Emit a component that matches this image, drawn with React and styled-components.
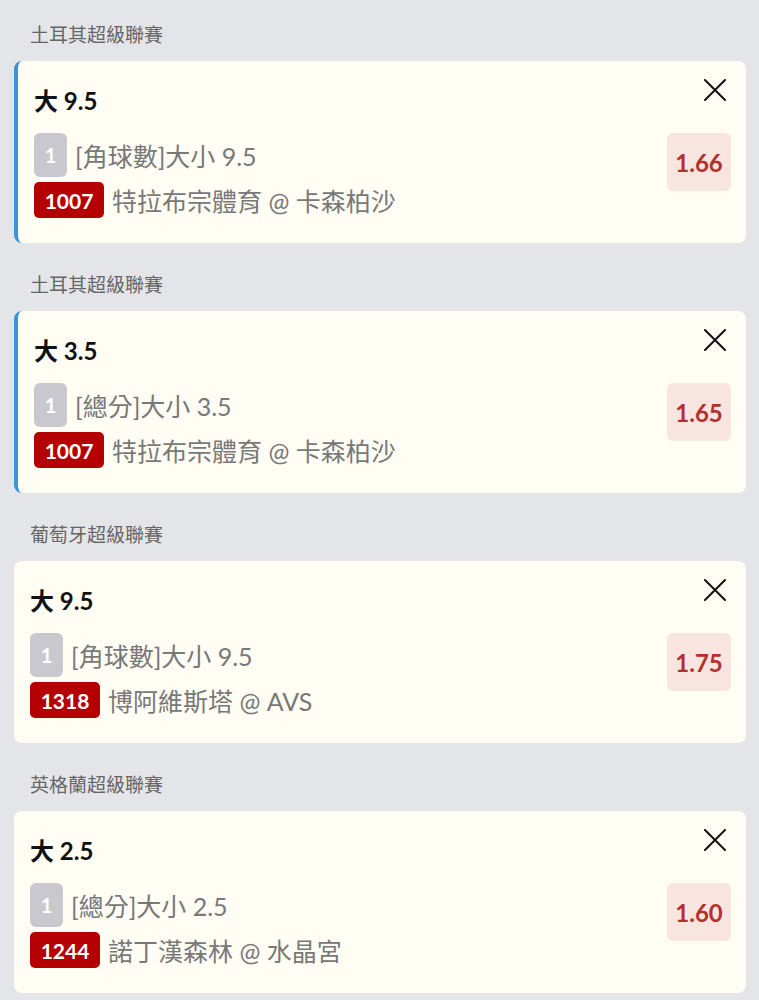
import React from "react";
import styled, { createGlobalStyle } from "styled-components";

const Global = createGlobalStyle`
  html, body { margin: 0; padding: 0; background: #e4e5e9; }
  body { font-family: Lato, "Noto Sans CJK TC", sans-serif; }
  * { box-sizing: border-box; }
`;

const Page = styled.div`
  display: flex;
  flex-direction: column;
  gap: 17px;
  padding: 10px 13px 0 14px;
  background: #e4e5e9;
  min-height: 1000px;
`;

const Section = styled.section`
  display: flex;
  flex-direction: column;
`;

const League = styled.div`
  height: 51px;
  display: flex;
  align-items: center;
  padding: 0 0 5px 16px;
  font-size: 19px;
  color: #666;
`;

const Card = styled.div`
  background: #fffdf4;
  border-radius: 8px;
  border-left: ${(p) => (p.$active ? "4px solid #3b94d9" : "none")};
  padding: 18px 15px 25px 16px;
  height: 182px;
  display: flex;
  flex-direction: column;
`;

const Header = styled.div`
  display: flex;
  justify-content: space-between;
  align-items: flex-start;
`;

const Title = styled.div`
  margin-top: 7px;
  font-size: 24px;
  line-height: 30px;
  font-weight: 700;
  color: #111;
`;

const Close = styled.button`
  border: none;
  background: none;
  padding: 0;
  margin-right: 5px;
  width: 22px;
  height: 22px;
  display: flex;
  cursor: pointer;
`;

const Body = styled.div`
  display: flex;
  justify-content: space-between;
  align-items: flex-start;
  margin-top: 17px;
`;

const Lines = styled.div`
  display: flex;
  flex-direction: column;
  gap: 5px;
`;

const Line = styled.div`
  display: flex;
  align-items: center;
  gap: 8px;
  font-size: 25px;
  font-weight: 400;
  color: #787878;
  white-space: nowrap;
`;

const SeqBadge = styled.span`
  width: 33px;
  height: 44px;
  border-radius: 6px;
  background: #c8c8ce;
  color: #fff;
  font-weight: 700;
  font-size: 20px;
  display: flex;
  align-items: center;
  justify-content: center;
`;

const CodeBadge = styled.span`
  min-width: 70px;
  height: 36px;
  padding: 0 6px;
  border-radius: 5px;
  background: #b50003;
  color: #fff;
  font-weight: 700;
  font-size: 21px;
  display: flex;
  align-items: center;
  justify-content: center;
`;

const Odds = styled.div`
  width: 64px;
  height: 58px;
  border-radius: 6px;
  background: #f8e5df;
  color: #b3302c;
  font-weight: 700;
  font-size: 24px;
  display: flex;
  align-items: center;
  justify-content: center;
`;

const XIcon = () => (
  <svg width="22" height="22" viewBox="0 0 22 22" fill="none">
    <path d="M1 1L21 21M21 1L1 21" stroke="#111" strokeWidth="2" strokeLinecap="round" />
  </svg>
);

const bets = [
  { league: "土耳其超級聯賽", title: "大 9.5", market: "[角球數]大小 9.5", code: "1007", match: "特拉布宗體育 @ 卡森柏沙", odds: "1.66", active: true },
  { league: "土耳其超級聯賽", title: "大 3.5", market: "[總分]大小 3.5", code: "1007", match: "特拉布宗體育 @ 卡森柏沙", odds: "1.65", active: true },
  { league: "葡萄牙超級聯賽", title: "大 9.5", market: "[角球數]大小 9.5", code: "1318", match: "博阿維斯塔 @ AVS", odds: "1.75", active: false },
  { league: "英格蘭超級聯賽", title: "大 2.5", market: "[總分]大小 2.5", code: "1244", match: "諾丁漢森林 @ 水晶宮", odds: "1.60", active: false },
];

export default function App() {
  return (
    <>
      <Global />
      <Page>
        {bets.map((b, i) => (
          <Section key={i}>
            <League>{b.league}</League>
            <Card $active={b.active}>
              <Header>
                <Title>{b.title}</Title>
                <Close aria-label="close"><XIcon /></Close>
              </Header>
              <Body>
                <Lines>
                  <Line>
                    <SeqBadge>1</SeqBadge>
                    <span>{b.market}</span>
                  </Line>
                  <Line>
                    <CodeBadge>{b.code}</CodeBadge>
                    <span>{b.match}</span>
                  </Line>
                </Lines>
                <Odds>{b.odds}</Odds>
              </Body>
            </Card>
          </Section>
        ))}
      </Page>
    </>
  );
}
